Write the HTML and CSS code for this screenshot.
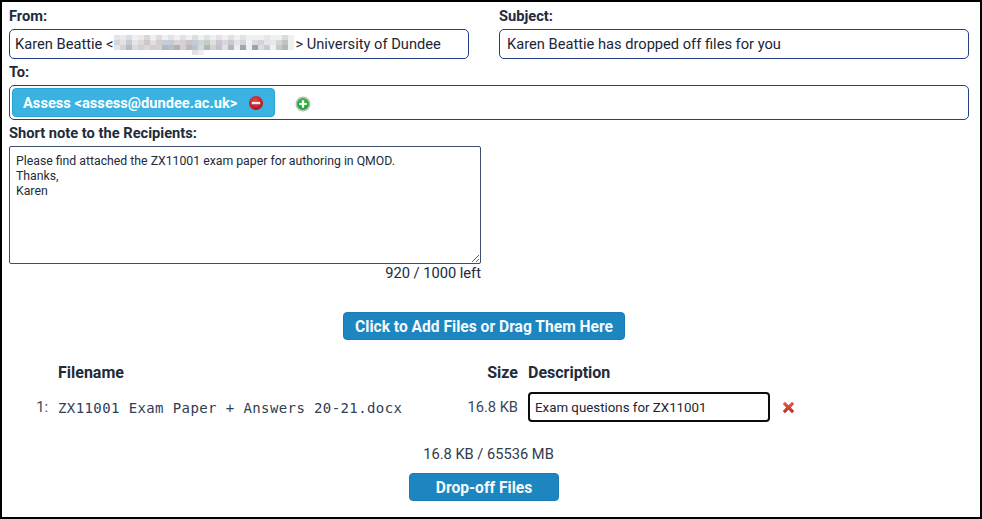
FILE: index.html
```html
<!DOCTYPE html>
<html lang="en">
<head>
<meta charset="utf-8">
<title>Drop-off</title>
<link rel="stylesheet" href="styles.css">
</head>
<body>
<main class="frame">
  <section class="top-row">
    <div class="col-from">
      <div class="label">From:</div>
      <div class="field">Karen Beattie &lt;<svg class="blur" width="180" height="22" viewBox="0 0 180 22" aria-hidden="true">
        <rect width="180" height="15" fill="#eef0f1"/>
        <rect x="0" y="0" width="6" height="5" fill="#e4e5e8"/><rect x="6" y="0" width="6" height="5" fill="#eceaea"/><rect x="12" y="0" width="6" height="5" fill="#d9dde2"/><rect x="24" y="0" width="6" height="5" fill="#e8eaeb"/><rect x="30" y="0" width="6" height="5" fill="#dbd6d8"/><rect x="42" y="0" width="6" height="5" fill="#e0dcdc"/><rect x="54" y="0" width="6" height="5" fill="#e0e4e8"/><rect x="66" y="0" width="6" height="5" fill="#e3dfe2"/><rect x="78" y="0" width="6" height="5" fill="#dcdde3"/><rect x="90" y="0" width="6" height="5" fill="#dfe3e3"/><rect x="102" y="0" width="6" height="5" fill="#e4e0e6"/><rect x="114" y="0" width="6" height="5" fill="#dfe0e4"/><rect x="126" y="0" width="6" height="5" fill="#e2e2e6"/><rect x="150" y="0" width="6" height="5" fill="#e6e6e8"/><rect x="168" y="0" width="6" height="5" fill="#d8dcda"/>
        <rect x="0" y="5" width="6" height="5" fill="#d3d7dc"/><rect x="6" y="5" width="6" height="5" fill="#e3e0e0"/><rect x="12" y="5" width="6" height="5" fill="#c6cbd3"/><rect x="18" y="5" width="6" height="5" fill="#e7e3e3"/><rect x="24" y="5" width="6" height="5" fill="#ddd8da"/><rect x="30" y="5" width="6" height="5" fill="#cfc7ce"/><rect x="36" y="5" width="6" height="5" fill="#e2dfe2"/><rect x="42" y="5" width="6" height="5" fill="#d4cdcd"/><rect x="48" y="5" width="6" height="5" fill="#c5ced6"/><rect x="54" y="5" width="6" height="5" fill="#c3ccd6"/><rect x="60" y="5" width="6" height="5" fill="#d5d7da"/><rect x="66" y="5" width="6" height="5" fill="#d7cfd1"/><rect x="72" y="5" width="6" height="5" fill="#c9c4cb"/><rect x="78" y="5" width="6" height="5" fill="#c6cbd6"/><rect x="84" y="5" width="6" height="5" fill="#ced5d5"/><rect x="90" y="5" width="6" height="5" fill="#c2cdc9"/><rect x="96" y="5" width="6" height="5" fill="#dde1de"/><rect x="102" y="5" width="6" height="5" fill="#ccc6d3"/><rect x="108" y="5" width="6" height="5" fill="#d7d7de"/><rect x="114" y="5" width="6" height="5" fill="#c9cad1"/><rect x="120" y="5" width="6" height="5" fill="#e2e2e5"/><rect x="126" y="5" width="6" height="5" fill="#d3d4da"/><rect x="138" y="5" width="6" height="5" fill="#d9dadd"/><rect x="144" y="5" width="6" height="5" fill="#d2d4d9"/><rect x="150" y="5" width="6" height="5" fill="#e4e4e6"/><rect x="156" y="5" width="6" height="5" fill="#e6e8e8"/><rect x="162" y="5" width="6" height="5" fill="#d3d6d5"/><rect x="168" y="5" width="6" height="5" fill="#bfc4c3"/>
        <rect x="0" y="10" width="6" height="5" fill="#e2e4e8"/><rect x="6" y="10" width="6" height="5" fill="#d4d3d6"/><rect x="12" y="10" width="6" height="5" fill="#b3bbc8"/><rect x="18" y="10" width="6" height="5" fill="#dcd9da"/><rect x="24" y="10" width="6" height="5" fill="#d4cfd2"/><rect x="30" y="10" width="6" height="5" fill="#dcd6d8"/><rect x="36" y="10" width="6" height="5" fill="#cfcfd2"/><rect x="42" y="10" width="6" height="5" fill="#d5d0d2"/><rect x="48" y="10" width="6" height="5" fill="#aeb8c6"/><rect x="54" y="10" width="6" height="5" fill="#b6c0cb"/><rect x="60" y="10" width="6" height="5" fill="#b7b0a9"/><rect x="66" y="10" width="6" height="5" fill="#cfd2d4"/><rect x="72" y="10" width="6" height="5" fill="#c0b5bb"/><rect x="78" y="10" width="6" height="5" fill="#bcc3d0"/><rect x="84" y="10" width="6" height="5" fill="#d3d8d9"/><rect x="90" y="10" width="6" height="5" fill="#aeb9b4"/><rect x="96" y="10" width="6" height="5" fill="#d0d5d2"/><rect x="102" y="10" width="6" height="5" fill="#c6c0cd"/><rect x="108" y="10" width="6" height="5" fill="#e1e1e5"/><rect x="114" y="10" width="6" height="5" fill="#b4b6bf"/><rect x="120" y="10" width="6" height="5" fill="#eceded"/><rect x="126" y="10" width="6" height="5" fill="#a0a5ae"/><rect x="138" y="10" width="6" height="5" fill="#9aa2ac"/><rect x="144" y="10" width="6" height="5" fill="#dadcdf"/><rect x="150" y="10" width="6" height="5" fill="#c8cacd"/><rect x="162" y="10" width="6" height="5" fill="#c5c9c8"/><rect x="168" y="10" width="6" height="5" fill="#b5bab9"/>
        <rect x="78" y="15" width="6" height="5" fill="#e2e2e4"/><rect x="84" y="15" width="6" height="5" fill="#eeeef0"/>
      </svg>&gt; University of Dundee</div>
    </div>
    <div class="col-subject">
      <div class="label">Subject:</div>
      <div class="field">Karen Beattie has dropped off files for you</div>
    </div>
  </section>

  <div class="label label-to">To:</div>
  <div class="recipients">
    <div class="chip">
      <span>Assess &lt;assess@dundee.ac.uk&gt;</span>
      <svg class="icon-round" width="16" height="16" viewBox="0 0 16 16" aria-hidden="true">
        <defs><radialGradient id="redball" cx="45%" cy="35%" r="70%"><stop offset="0" stop-color="#e8474c"/><stop offset="1" stop-color="#a80f16"/></radialGradient></defs>
        <circle cx="8" cy="8" r="7" fill="url(#redball)"/>
        <rect x="3.8" y="6.9" width="8.4" height="2.3" fill="#f6eeee"/>
      </svg>
    </div>
    <svg class="icon-add" width="16" height="16" viewBox="0 0 16 16" aria-hidden="true">
      <defs><radialGradient id="greenball" cx="50%" cy="40%" r="65%"><stop offset="0" stop-color="#3fd04c"/><stop offset="1" stop-color="#0f9a20"/></radialGradient></defs>
      <circle cx="8" cy="8" r="7.5" fill="#b9bdb9"/>
      <circle cx="8" cy="8" r="5.8" fill="url(#greenball)"/>
      <path d="M6.9 4.2h2.2v2.7h2.7v2.2H9.1v2.7H6.9V9.1H4.2V6.9h2.7z" fill="#fff"/>
    </svg>
  </div>

  <div class="label label-note">Short note to the Recipients:</div>
  <div class="note-col">
    <textarea class="note" rows="6" cols="60">Please find attached the ZX11001 exam paper for authoring in QMOD.
Thanks,
Karen</textarea>
    <div class="counter">920 / 1000 left</div>
  </div>

  <div class="centered add-row"><button class="btn btn-add" type="button">Click to Add Files or Drag Them Here</button></div>

  <section class="files">
    <div></div>
    <div class="th">Filename</div>
    <div class="th th-size">Size</div>
    <div class="th th-desc">Description</div>
    <div></div>

    <div class="num">1:</div>
    <div class="filename">ZX11001 Exam Paper + Answers 20-21.docx</div>
    <div class="size">16.8 KB</div>
    <div class="desc">Exam questions for ZX11001</div>
    <svg class="icon-x" width="13" height="13" viewBox="0 0 13 13" aria-hidden="true">
      <defs><linearGradient id="xred" x1="0" y1="0" x2="0" y2="1"><stop offset="0" stop-color="#e0604f"/><stop offset="1" stop-color="#bf2a1c"/></linearGradient></defs>
      <path d="M0.8 3 3 0.8 6.5 4.2 10 0.8 12.2 3 8.8 6.5 12.2 10 10 12.2 6.5 8.8 3 12.2 0.8 10 4.2 6.5z" fill="url(#xred)"/>
    </svg>
  </section>

  <div class="centered total">16.8 KB / 65536 MB</div>
  <div class="centered drop-row"><button class="btn btn-drop" type="button">Drop-off Files</button></div>
</main>
</body>
</html>
```
FILE: styles.css
```css
* { box-sizing: border-box; }
html, body { margin: 0; padding: 0; background: #fff; }
body {
  width: 982px;
  height: 519px;
  overflow: hidden;
  font-family: Roboto, "Liberation Sans", sans-serif;
  font-size: 14.67px;
  color: #212b3b;
}
.frame {
  width: 982px;
  height: 519px;
  border: 2px solid #000;
  padding: 6px 11px 0 7px;
  display: flex;
  flex-direction: column;
}
.top-row { display: flex; gap: 30px; }
.col-from { width: 460px; }
.col-subject { width: 470px; }
.label {
  font-weight: 700;
  font-size: 14.67px;
  line-height: 17px;
  margin-bottom: 4px;
  color: #212b3b;
}
.field {
  height: 30px;
  border: 1px solid #263f86;
  border-radius: 5px;
  padding: 0 7px 0 5px;
  display: flex;
  align-items: center;
  white-space: pre;
  color: #1b2636;
}
.col-subject .field { padding-left: 7px; }
.blur { flex: none; margin: 3px 1px 0 1px; }
.label-to { margin: 5px 0 4px; }
.recipients {
  height: 35px;
  width: 960px;
  border: 1px solid #263f86;
  border-radius: 5px;
  padding: 2px;
  display: flex;
  align-items: center;
}
.chip {
  width: 263px;
  height: 29px;
  background: #3ab3e2;
  border: 1px solid #2ea5d4;
  border-radius: 4px;
  color: #fff;
  font-weight: 700;
  display: flex;
  align-items: center;
  padding-left: 10px;
}
.icon-round { margin-left: 11px; }
.icon-add { margin: 3px 0 0 20px; }
.label-note { margin: 5px 0 4px; }
.note-col { width: 472px; display: flex; flex-direction: column; }
.note {
  display: block;
  width: 472px;
  height: 118px;
  margin: 0;
  border: 1px solid #3c4f6e;
  border-radius: 2px;
  padding: 7px 6px 2px;
  font-family: Roboto, "Liberation Sans", sans-serif;
  font-size: 12.27px;
  line-height: 15px;
  color: #212b3b;
  background: #fff;
  resize: vertical;
  outline: none;
}
.counter { text-align: right; line-height: 18px; }
.centered { display: flex; justify-content: center; width: 950px; }
.add-row { margin-top: 30px; }
.btn {
  background: #1d86c1;
  border: 1px solid #1a7cb3;
  border-radius: 4px;
  color: #f4f9fc;
  font-family: Roboto, "Liberation Sans", sans-serif;
  font-weight: 700;
  font-size: 15.6px;
  padding: 2px 0 0;
}
.btn-add { width: 282px; height: 28px; }
.btn-drop { width: 150px; height: 28px; }
.files {
  display: grid;
  grid-template-columns: 49px 379px 81px 242px 13px;
  row-gap: 8px;
  align-items: center;
  margin-top: 22px;
}
.th { font-weight: 700; font-size: 16px; line-height: 22px; }
.th-size { text-align: right; }
.th-desc { padding-left: 10px; }
.num { text-align: right; padding-right: 10px; color: #3b4759; }
.filename {
  font-family: "DejaVu Sans Mono", "Liberation Mono", monospace;
  font-size: 14px;
  letter-spacing: .4px;
  line-height: 19px;
  padding-top: 2px;
  white-space: nowrap;
  color: #2f3d55;
}
.size { text-align: right; color: #3b4759; }
.desc {
  width: 242px;
  height: 30px;
  margin-left: 10px;
  border: 2px solid #0c0c0c;
  border-radius: 4px;
  padding: 0 5px;
  font-size: 13.3px;
  line-height: 27px;
  color: #1b2636;
}
.icon-x { margin-left: 22px; }
.total { margin-top: 24px; padding-left: 9px; line-height: 17px; color: #303b4d; }
.drop-row { margin-top: 10px; }
```
